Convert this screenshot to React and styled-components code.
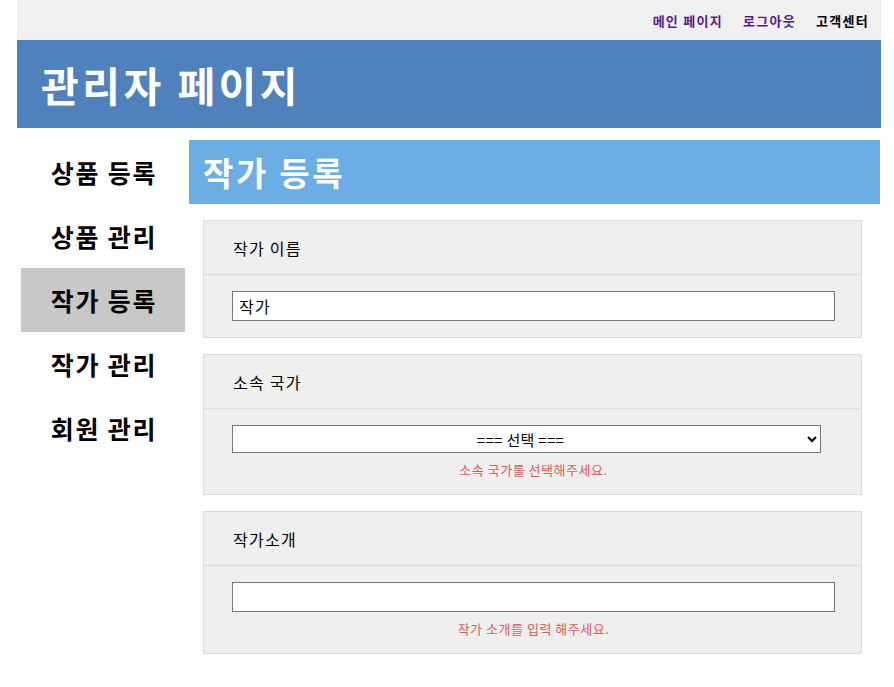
import React from "react";
import styled, { createGlobalStyle } from "styled-components";

const Global = createGlobalStyle`
  html, body { margin: 0; padding: 0; background: #fff; }
  body {
    font-family: "Noto Sans CJK KR", "Noto Sans", sans-serif;
    color: #000;
    letter-spacing: 0.08em;
  }
  * { box-sizing: border-box; }
`;

const Wrapper = styled.div`
  margin-left: 17px;
  width: 864px;
`;

const TopBar = styled.nav`
  height: 40px;
  background: #f0f0f0;
  display: flex;
  justify-content: flex-end;
  align-items: center;
  gap: 20px;
  padding-right: 12px;
`;

const TopLink = styled.a`
  font-size: 13px;
  font-weight: 700;
  line-height: 1;
  text-decoration: none;
  color: ${(p) => (p.$visited ? "#551a8b" : "#000")};
  cursor: pointer;
`;

const Header = styled.header`
  height: 88px;
  background: #4f81bd;
  display: flex;
  align-items: center;
  padding-left: 24px;
`;

const HeaderTitle = styled.h1`
  margin: 0;
  color: #fff;
  font-size: 41px;
  font-weight: 700;
  line-height: 1;
  letter-spacing: 0.085em;
`;

const Body = styled.div`
  display: flex;
  align-items: flex-start;
  margin-top: 12px;
`;

const Sidebar = styled.ul`
  list-style: none;
  margin: 0 0 0 4px;
  padding: 0;
  width: 164px;
`;

const NavItem = styled.li`
  height: 64px;
  display: flex;
  align-items: center;
  justify-content: center;
  padding-left: 2px;
  font-size: 25px;
  font-weight: 700;
  line-height: 1;
  letter-spacing: 0.07em;
  background: ${(p) => (p.$active ? "#c8c8c8" : "transparent")};
`;

const Main = styled.main`
  margin-left: 4px;
  width: 691px;
`;

const MainTitle = styled.h2`
  margin: 0;
  height: 64px;
  display: flex;
  align-items: center;
  padding-left: 14px;
  background: #6aaee4;
  color: #fff;
  font-size: 33px;
  font-weight: 700;
  line-height: 1;
  letter-spacing: 0.08em;
`;

const Cards = styled.div`
  display: flex;
  flex-direction: column;
  gap: 16px;
  padding: 16px 18px 0 14px;
`;

const Card = styled.section`
  background: #efefef;
  border: 1px solid #dcdcdc;
`;

const CardHead = styled.div`
  height: 54px;
  display: flex;
  align-items: center;
  padding-left: 29px;
  border-bottom: 1px solid #dcdcdc;
  font-size: 16px;
  font-weight: 400;
  line-height: 1;
`;

const CardBody = styled.div`
  padding: 16px 26px 16px 28px;
  display: flex;
  flex-direction: column;
`;

const TextInput = styled.input`
  width: 100%;
  height: 30px;
  border: 1px solid #767676;
  background: #fff;
  padding: 0 6px;
  font-family: inherit;
  font-size: 16px;
  letter-spacing: 0.08em;
  color: #000;
  outline: none;
`;

const Select = styled.select`
  width: calc(100% - 14px);
  height: 28px;
  border: 1px solid #767676;
  background: #fff;
  font-family: inherit;
  font-size: 15px;
  letter-spacing: 0.02em;
  text-align: center;
  text-align-last: center;
  color: #000;
  border-radius: 0;
  outline: none;
`;

const ErrorText = styled.p`
  margin: 9px 0 0;
  text-align: center;
  font-size: 13px;
  line-height: 16px;
  letter-spacing: 0.04em;
  color: #e05a5a;
`;

export default function App() {
  return (
    <>
      <Global />
      <Wrapper>
        <TopBar>
          <TopLink $visited>메인 페이지</TopLink>
          <TopLink $visited>로그아웃</TopLink>
          <TopLink>고객센터</TopLink>
        </TopBar>
        <Header>
          <HeaderTitle>관리자 페이지</HeaderTitle>
        </Header>
        <Body>
          <Sidebar>
            <NavItem>상품 등록</NavItem>
            <NavItem>상품 관리</NavItem>
            <NavItem $active>작가 등록</NavItem>
            <NavItem>작가 관리</NavItem>
            <NavItem>회원 관리</NavItem>
          </Sidebar>
          <Main>
            <MainTitle>작가 등록</MainTitle>
            <Cards>
              <Card>
                <CardHead>작가 이름</CardHead>
                <CardBody>
                  <TextInput defaultValue="작가" />
                </CardBody>
              </Card>
              <Card>
                <CardHead>소속 국가</CardHead>
                <CardBody>
                  <Select defaultValue="">
                    <option value="">=== 선택 ===</option>
                  </Select>
                  <ErrorText>소속 국가를 선택해주세요.</ErrorText>
                </CardBody>
              </Card>
              <Card>
                <CardHead>작가소개</CardHead>
                <CardBody>
                  <TextInput />
                  <ErrorText>작가 소개를 입력 해주세요.</ErrorText>
                </CardBody>
              </Card>
            </Cards>
          </Main>
        </Body>
      </Wrapper>
    </>
  );
}
